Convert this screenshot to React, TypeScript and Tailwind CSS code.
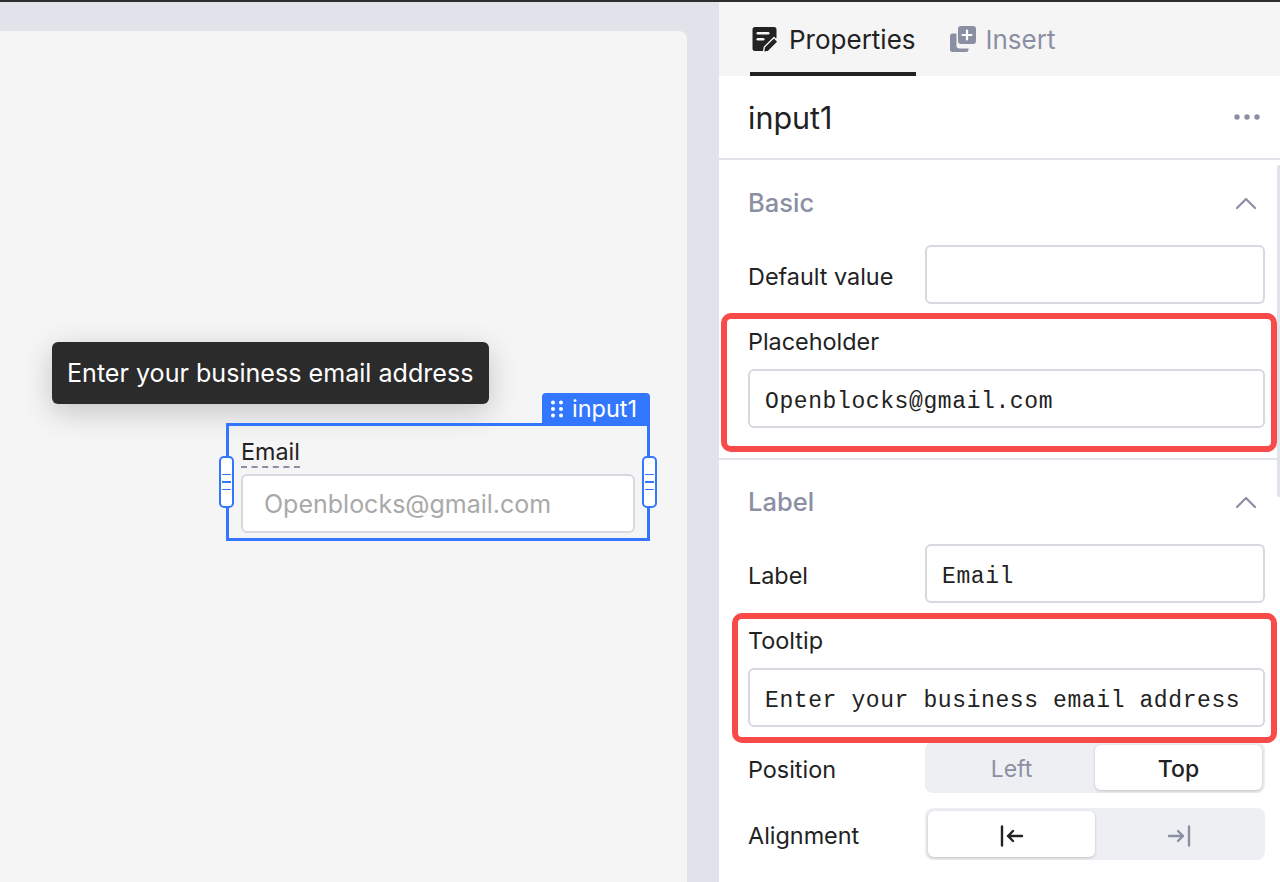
const sans = "font-['Inter','Liberation_Sans',sans-serif]";

function PropertiesIcon() {
  return (
    <svg width="28" height="28" viewBox="0 0 28 28" aria-hidden="true">
      <path d="M5 2h19a2.500 2.500 0 0 1 2.500 2.500v8.500L13 26H5a2.500 2.500 0 0 1-2.500-2.500v-19A2.500 2.500 0 0 1 5 2z" fill="#222222" />
      <rect x="6.500" y="7" width="13" height="2.600" rx="1.300" fill="#f5f5f5" />
      <rect x="6.500" y="13" width="8" height="2.600" rx="1.300" fill="#f5f5f5" />
      <path d="M13.500 27.500l.8-5.500L24 12.500l4 4.200-9.700 9.800z" fill="#222222" stroke="#f5f5f5" strokeWidth="1.400" />
    </svg>
  );
}

function InsertIcon() {
  return (
    <svg width="28" height="28" viewBox="0 0 28 28" aria-hidden="true">
      <path d="M3.500 8.500h4v12a3 3 0 0 0 3 3h9v1a2.500 2.500 0 0 1-2.500 2.500H3.500A2.500 2.500 0 0 1 1 24.500v-13.500a2.500 2.500 0 0 1 2.500-2.500z" fill="#8b8fa3" />
      <rect x="9" y="1" width="18" height="18" rx="3" fill="#8b8fa3" />
      <path d="M18 5.500v9M13.500 10h9" stroke="#ffffff" strokeWidth="2.200" strokeLinecap="round" />
    </svg>
  );
}

function Chevron() {
  return (
    <svg width="22" height="14" viewBox="0 0 22 14" fill="none" aria-hidden="true">
      <path d="M2 12l9-9 9 9" stroke="#8b8fa3" strokeWidth="2.200" strokeLinecap="round" strokeLinejoin="round" />
    </svg>
  );
}

function Handle({ className }: { className: string }) {
  return (
    <div className={`absolute top-[30px] flex h-[52px] w-[15px] flex-col items-center justify-center gap-[6px] rounded-[5px] border-2 border-[#3377ff] bg-white ${className}`}>
      <span className="h-[1.500px] w-[9px] bg-[#3377ff]" />
      <span className="h-[1.500px] w-[9px] bg-[#3377ff]" />
      <span className="h-[1.500px] w-[9px] bg-[#3377ff]" />
    </div>
  );
}

function SectionHead({ title }: { title: string }) {
  return (
    <div className="flex h-[30px] items-center justify-between pl-[29px] pr-[23px]">
      <span className="text-[25.500px] font-medium text-[#8b8fa3]">{title}</span>
      <Chevron />
    </div>
  );
}

function CodeInput({ value, className }: { value?: string; className: string }) {
  return (
    <div className={`flex h-[59px] items-center rounded-[6px] border-2 border-[#d7d9e0] bg-white pl-[15px] pt-[8px] font-['Liberation_Mono',monospace] text-[23px] tracking-[0.6px] whitespace-pre text-[#222222] ${className}`}>
      {value}
    </div>
  );
}

function Row({ label, children, className }: { label: string; children: React.ReactNode; className?: string }) {
  return (
    <div className={`flex items-center pl-[29px] pr-[15px] ${className ?? ""}`}>
      <span className="w-[177px] pt-[4px] text-[23.400px] text-[#222222]">{label}</span>
      {children}
    </div>
  );
}

function Segment({ children, active, className }: { children: React.ReactNode; active?: boolean; className?: string }) {
  return (
    <div className={`flex h-full flex-1 items-center justify-center rounded-[6px] pt-[3px] text-[23px] ${active ? "bg-white font-medium text-[#222222] shadow-[0_1px_3px_rgba(0,0,0,0.2)]" : "text-[#8b8fa3]"} ${className ?? ""}`}>
      {children}
    </div>
  );
}

export default function App() {
  return (
    <div className={`${sans} flex h-[882px] w-[1280px] flex-col overflow-hidden bg-[#e1e3eb]`}>
      <div className="h-[2px] shrink-0 bg-[#2d2d2d]" />
      <div className="flex min-h-0 flex-1">
        <div className="w-[719px] shrink-0 pr-[32px] pt-[29px]">
          <div className="relative h-full rounded-tr-[8px] bg-[#f5f5f5]">
            <div className="absolute left-[52px] top-[311px] flex h-[62px] w-[437px] items-center rounded-[6px] bg-[#2b2b2b] pl-[15px] pt-[2px] text-[25.100px] text-white shadow-[0_8px_30px_rgba(0,0,0,0.2)]">
              Enter your business email address
            </div>
            <div className="absolute left-[226px] top-[392px] h-[118px] w-[424px] border-[3px] border-[#3377ff]">
              <div className="absolute right-[-3px] top-[-33px] flex h-[31px] w-[108px] items-center gap-[9px] rounded-t-[4px] bg-[#3377ff] pl-[9px] text-[23.500px] text-white">
                <svg width="12" height="18" viewBox="0 0 12 18" aria-hidden="true" fill="#ffffff">
                  <circle cx="2" cy="2.500" r="2" /><circle cx="10" cy="2.500" r="2" />
                  <circle cx="2" cy="9" r="2" /><circle cx="10" cy="9" r="2" />
                  <circle cx="2" cy="15.500" r="2" /><circle cx="10" cy="15.500" r="2" />
                </svg>
                input1
              </div>
              <Handle className="left-[-10px]" />
              <Handle className="right-[-10px]" />
              <div className="pl-[12px] pt-[11px]">
                <div className="w-fit border-b-2 border-dashed border-[#8b8fa3] text-[23.300px] leading-[29px] text-[#222222]">Email</div>
                <div className="mt-[6px] flex h-[59px] w-[394px] items-center rounded-[6px] border-2 border-[#d7d9e0] bg-white pl-[21px] pt-[2px] text-[25px] text-[#a9a9a9]">
                  Openblocks@gmail.com
                </div>
              </div>
            </div>
          </div>
        </div>

        <div className="relative w-[561px] shrink-0 bg-white">
          <div className="flex h-[74px] items-start gap-[33px] bg-[#f5f5f5] pl-[31px]">
            <div className="flex h-full items-center gap-[11px] border-b-[4px] border-[#222222] pt-[4px] text-[26px] text-[#222222]">
              <PropertiesIcon />
              Properties
            </div>
            <div className="flex h-full items-center gap-[9px] text-[26px] text-[#8b8fa3]">
              <InsertIcon />
              Insert
            </div>
          </div>

          <div className="flex h-[84px] items-center justify-between border-b-2 border-[#e1e3eb] pl-[29px] pr-[20px]">
            <span className="pt-[1px] text-[30.500px] text-[#222222]">input1</span>
            <svg width="26" height="6" viewBox="0 0 26 6" fill="#8b8fa3" aria-hidden="true">
              <circle cx="3" cy="3" r="2.700" /><circle cx="13" cy="3" r="2.700" /><circle cx="23" cy="3" r="2.700" />
            </svg>
          </div>

          <div className="h-[300px] border-b-2 border-[#e1e3eb] pt-[28px]">
            <SectionHead title="Basic" />
            <Row label="Default value" className="mt-[27px]">
              <CodeInput className="w-[340px]" />
            </Row>
            <div className="mt-[23px] pl-[29px] text-[23.400px] leading-[29px] text-[#222222]">Placeholder</div>
            <div className="pl-[29px] pr-[15px] pt-[13px]">
              <CodeInput value="Openblocks@gmail.com" />
            </div>
          </div>

          <div className="pt-[27px]">
            <SectionHead title="Label" />
            <Row label="Label" className="mt-[27px]">
              <CodeInput value="Email" className="w-[340px]" />
            </Row>
            <div className="mt-[23px] pl-[29px] text-[23.400px] leading-[29px] text-[#222222]">Tooltip</div>
            <div className="pl-[29px] pr-[15px] pt-[13px]">
              <CodeInput value="Enter your business email address" />
            </div>
            <Row label="Position" className="mt-[15px]">
              <div className="flex h-[51px] w-[340px] rounded-[8px] bg-[#eeeff2] p-[3px]">
                <Segment>Left</Segment>
                <Segment active>Top</Segment>
              </div>
            </Row>
            <Row label="Alignment" className="mt-[15px]">
              <div className="flex h-[52px] w-[340px] rounded-[8px] bg-[#eeeff2] p-[3px]">
                <Segment active>
                  <svg width="24" height="22" viewBox="0 0 24 22" fill="none" stroke="#222222" strokeWidth="2.400" strokeLinecap="round" strokeLinejoin="round" aria-hidden="true">
                    <path d="M2 1.500v19M22 11H8M13 6l-5 5 5 5" />
                  </svg>
                </Segment>
                <Segment>
                  <svg width="24" height="22" viewBox="0 0 24 22" fill="none" stroke="#8b8fa3" strokeWidth="2.400" strokeLinecap="round" strokeLinejoin="round" aria-hidden="true">
                    <path d="M22 1.500v19M2 11h14M11 6l5 5-5 5" />
                  </svg>
                </Segment>
              </div>
            </Row>
          </div>

          <div className="absolute right-0 top-[163px] h-[332px] w-[3px] rounded-l-[2px] bg-[#e1e3eb]" />
          <div className="absolute left-[2px] top-[311px] h-[139px] w-[556px] rounded-[10px] border-[6px] border-[#f94a4a]" />
          <div className="absolute left-[13px] top-[611px] h-[130px] w-[545px] rounded-[10px] border-[6px] border-[#f94a4a]" />
        </div>
      </div>
    </div>
  );
}
